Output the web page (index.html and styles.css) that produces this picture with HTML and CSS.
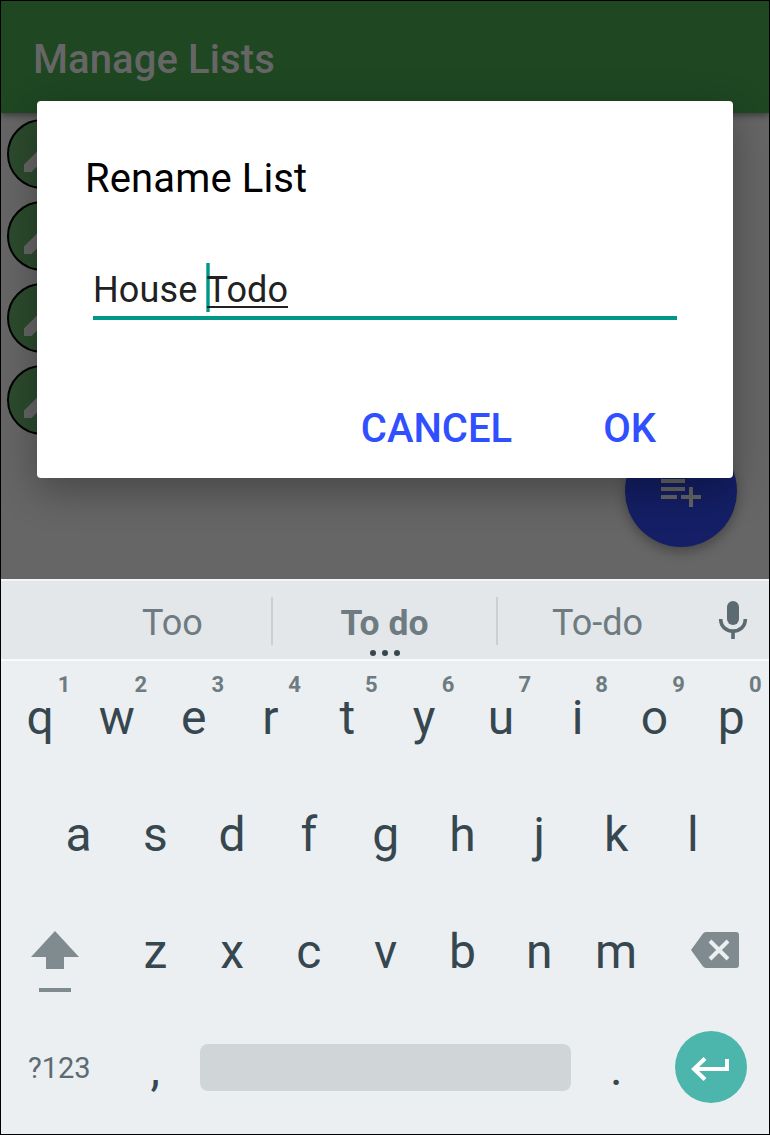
FILE: index.html
```html
<!DOCTYPE html>
<html lang="en">
<head>
<meta charset="utf-8">
<title>Manage Lists</title>
<link rel="stylesheet" href="styles.css">
</head>
<body>
<div class="phone">
  <main class="app">
    <header class="app-bar"><h1 class="app-title">Manage Lists</h1></header>
    <div class="list">
      <span class="edit"><svg viewBox="0 0 24 24"><path d="M3 17.25V21h3.75L17.81 9.94l-3.75-3.75zM20.71 7.04a1 1 0 0 0 0-1.41l-2.34-2.34a1 1 0 0 0-1.41 0l-1.83 1.83 3.75 3.75z"/></svg></span>
      <span class="edit"><svg viewBox="0 0 24 24"><path d="M3 17.25V21h3.75L17.81 9.94l-3.75-3.75zM20.71 7.04a1 1 0 0 0 0-1.41l-2.34-2.34a1 1 0 0 0-1.41 0l-1.83 1.83 3.75 3.75z"/></svg></span>
      <span class="edit"><svg viewBox="0 0 24 24"><path d="M3 17.25V21h3.75L17.81 9.94l-3.75-3.75zM20.71 7.04a1 1 0 0 0 0-1.41l-2.34-2.34a1 1 0 0 0-1.41 0l-1.83 1.83 3.75 3.75z"/></svg></span>
      <span class="edit"><svg viewBox="0 0 24 24"><path d="M3 17.25V21h3.75L17.81 9.94l-3.75-3.75zM20.71 7.04a1 1 0 0 0 0-1.41l-2.34-2.34a1 1 0 0 0-1.41 0l-1.83 1.83 3.75 3.75z"/></svg></span>
    </div>
    <div class="fab"><svg viewBox="0 0 24 24"><path d="M14 10H2v2h12zM14 6H2v2h12zM18 14v-4h-2v4h-4v2h4v4h2v-4h4v-2zM2 16h8v-2H2z"/></svg></div>
    <section class="dialog">
      <h2 class="dialog-title">Rename List</h2>
      <div class="field"><span>House&nbsp;</span><span class="composing">Todo</span></div>
      <div class="actions"><span>CANCEL</span><span>OK</span></div>
    </section>
  </main>
  <section class="keyboard">
    <div class="suggestions">
      <span class="word">Too</span>
      <span class="word best">To do<svg class="dots" viewBox="0 0 30 6"><circle cx="3" cy="3" r="3"/><circle cx="15" cy="3" r="3"/><circle cx="27" cy="3" r="3"/></svg></span>
      <span class="word">To-do</span>
      <span class="mic"><svg viewBox="0 0 28 38"><rect x="8" width="12" height="24" rx="6"/><path d="M1.7 18C1.7 25.5 7 30 14 30s12.300-4.500 12.300-12M14 30v8" fill="none" stroke="currentColor" stroke-width="3.600"/></svg></span>
    </div>
    <div class="keys">
      <div class="row">
        <span class="key">q<sup>1</sup></span><span class="key">w<sup>2</sup></span><span class="key">e<sup>3</sup></span><span class="key">r<sup>4</sup></span><span class="key">t<sup>5</sup></span><span class="key">y<sup>6</sup></span><span class="key">u<sup>7</sup></span><span class="key">i<sup>8</sup></span><span class="key">o<sup>9</sup></span><span class="key">p<sup>0</sup></span>
      </div>
      <div class="row inset">
        <span class="key">a</span><span class="key">s</span><span class="key">d</span><span class="key">f</span><span class="key">g</span><span class="key">h</span><span class="key">j</span><span class="key">k</span><span class="key">l</span>
      </div>
      <div class="row">
        <span class="key wide shift"><svg viewBox="0 0 48 61"><path d="M24 0 48 26H33v12H15V26H0zM8 57h32v4H8z"/></svg></span>
        <span class="key">z</span><span class="key">x</span><span class="key">c</span><span class="key">v</span><span class="key">b</span><span class="key">n</span><span class="key">m</span>
        <span class="key wide delete"><svg viewBox="0 0 48 36"><path d="M15 0H45q3 0 3 3V33q0 3-3 3H15q-2 0-3.200-1.700L0 18 11.800 1.700Q13 0 15 0z"/><path d="m19 9 18 18m0-18L19 27" stroke="#ebeff2" stroke-width="4"/></svg></span>
      </div>
      <div class="row">
        <span class="key wide symbols">?123</span>
        <span class="key">,</span>
        <span class="space"></span>
        <span class="key period">.</span>
        <span class="enter"><svg viewBox="0 0 38 24"><path d="M36 2v10H3M14 1.500 3 12l11 10.500" fill="none" stroke="#fff" stroke-width="4"/></svg></span>
      </div>
    </div>
  </section>
</div>
</body>
</html>
```
FILE: styles.css
```css
* { box-sizing: border-box; }
body { margin: 0; font-family: Roboto, "Liberation Sans", sans-serif; }
svg { display: block; fill: currentColor; overflow: visible; }
h1, h2 { margin: 0; }

.phone {
  width: 770px;
  height: 1135px;
  border: 1px solid #000;
  overflow: hidden;
  display: flex;
  flex-direction: column;
}

/* dimmed app behind the dialog */
.app {
  position: relative;
  height: 578px;
  background: #666;
  overflow: hidden;
}
.app-bar {
  position: relative;
  height: 112px;
  padding: 35px 32px 0;
  background: #1f4722;
  box-shadow: 0 2px 7px rgba(0, 0, 0, .45);
}
.app-title { font-size: 40px; line-height: 48px; font-weight: 500; letter-spacing: .1px; color: #666; }
.list {
  display: flex;
  flex-direction: column;
  gap: 12px;
  padding: 6px;
}
.edit {
  width: 70px;
  height: 70px;
  border: 2px solid #000;
  border-radius: 50%;
  background: #2c4b2d;
  color: #666;
  display: grid;
  place-items: center;
}
.edit svg { width: 48px; height: 48px; }
.fab {
  position: absolute;
  left: 624px;
  top: 434px;
  width: 112px;
  height: 112px;
  border-radius: 50%;
  background: #141f66;
  color: #666;
  display: grid;
  place-items: center;
  box-shadow: 0 5px 12px rgba(0, 0, 0, .3);
}
.fab svg { width: 48px; height: 48px; }
.dialog {
  position: absolute;
  z-index: 0;
  left: 36px;
  top: 100px;
  width: 696px;
  height: 377px;
  padding: 54px 56px 0;
  background: #fff;
  border-radius: 4px;
  box-shadow: 0 12px 40px rgba(0, 0, 0, .32);
}
.dialog-title { margin-left: -8px; font-size: 40px; line-height: 48px; font-weight: 400; letter-spacing: .12px; color: #000; }
.field {
  display: flex;
  height: 57px;
  margin-top: 60px;
  border-bottom: 4px solid #009688;
  font-size: 36px;
  line-height: 54px;
  letter-spacing: .14px;
  color: #212121;
}
.composing {
  position: relative;
  height: 45px;
  border-bottom: 2px solid #212121;
}
/* text cursor */
.composing::before {
  content: "";
  position: absolute;
  z-index: -1;
  left: -1px;
  top: 0;
  width: 4px;
  height: 49px;
  background: linear-gradient(90deg, #4db6ac 25%, #009688 25% 75%, #4db6ac 75%);
}
.actions {
  display: flex;
  justify-content: flex-end;
  gap: 91px;
  margin-top: 85px;
  padding-right: 21px;
  font-size: 40px;
  line-height: 48px;
  font-weight: 500;
  color: #304ffe;
}

.keyboard { height: 555px; background: #ebeff2; color: #37474f; }
.suggestions {
  height: 80px;
  border-top: 2px solid #f3f5f6;
  background: #e3e7ea;
  display: grid;
  grid-template-columns: 73px 199px 225px 199px 72px;
  align-items: center;
  color: #6e7b80;
  font-size: 36px;
}
.word { position: relative; height: 48px; margin-top: 2px; line-height: 53px; text-align: center; }
.word:first-child { grid-column: 2; }
.word:not(:nth-child(3)) { border-right: 2px solid #cacfd2; }
.best { font-weight: 700; font-size: 35.500px; }
.dots { position: absolute; left: 97px; top: 53px; width: 30px; height: 6px; color: #37474f; }
.mic { display: grid; justify-content: center; padding-right: 1px; color: #5c6b72; }
.mic svg { width: 28px; height: 38px; }

.keys { box-shadow: inset 0 2px #f7f9fa; }
.row { display: flex; height: 117px; align-items: center; }
.inset { padding: 0 38.4px; }
.key {
  position: relative;
  width: 76.8px;
  padding-left: 1.4px;
  line-height: 117px;
  font-size: 48px;
  text-align: center;
}
.key sup {
  position: absolute;
  right: 7.4px;
  top: 13px;
  font-size: 22px;
  line-height: 26px;
  font-weight: 700;
  color: #6e7b80;
}
.wide { width: 115.2px; }
.shift { padding: 19px 0 0 30px; color: #808b8f; }
.shift svg { width: 48px; height: 61px; }
.delete { padding: 0 0 3px 37px; color: #808b8f; }
.delete svg { width: 48px; height: 36px; }
.symbols { font-size: 29px; line-height: 115px; color: #5c6b72; }
.space { width: 371px; height: 47px; margin: 0 0 2px 7px; border-radius: 8px; background: #d0d5d8; }
.period { margin-left: 7px; padding-left: 0; }
.enter {
  width: 72px;
  height: 72px;
  margin: 0 0 3px 20px;
  border-radius: 50%;
  background: #4db6ac;
  display: grid;
  place-items: center;
}
.enter svg { width: 38px; height: 24px; margin: 3px 2px 0 0; }
```
